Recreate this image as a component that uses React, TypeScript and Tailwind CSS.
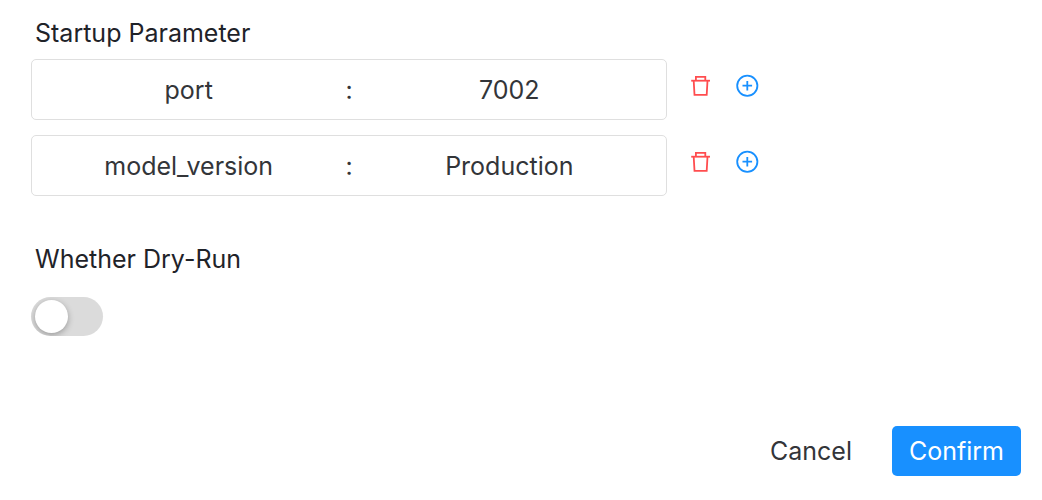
import { useState } from 'react';

type Param = {
  id: number;
  name: string;
  value: string;
};

function TrashIcon() {
  return (
    <svg className="h-6 w-6" viewBox="0 0 24 24" fill="none" stroke="currentColor" strokeWidth="1.8" aria-hidden="true">
      <path d="M2.2 6.7h18.8" />
      <path d="M6.9 6.7V2.9h9.4v3.8" />
      <path d="M4.7 6.7l.8 14.1h12.2l.8-14.1" />
    </svg>
  );
}

function PlusCircleIcon() {
  return (
    <svg className="h-6 w-6" viewBox="0 0 24 24" fill="none" stroke="currentColor" strokeWidth="1.8" aria-hidden="true">
      <circle cx="12.3" cy="11.7" r="10.1" />
      <path d="M12.3 6.9v9.6M7.5 11.7h9.6" />
    </svg>
  );
}

export default function App() {
  const [params, setParams] = useState<Param[]>([
    { id: 1, name: 'port', value: '7002' },
    { id: 2, name: 'model_version', value: 'Production' },
  ]);
  const [dryRun, setDryRun] = useState(false);

  const update = (id: number, patch: Partial<Param>) =>
    setParams(params.map((p) => (p.id === id ? { ...p, ...patch } : p)));

  const remove = (id: number) => setParams(params.filter((p) => p.id !== id));

  const addAfter = (index: number) => {
    const next = [...params];
    next.splice(index + 1, 0, { id: Date.now(), name: '', value: '' });
    setParams(next);
  };

  return (
    <form
      className="bg-white pt-[15px] pr-[21px] pb-6 pl-[31px] font-['Inter','Liberation_Sans',sans-serif] text-[25px] leading-9 text-[#333539]"
      onSubmit={(e) => e.preventDefault()}
    >
      <fieldset>
        <legend className="px-1 text-[#1f2329]">Startup Parameter</legend>
        <div className="mt-2 flex flex-col gap-[15px]">
          {params.map((param, index) => (
            <div key={param.id} className="flex items-start gap-[22px]">
              <div className="flex h-[61px] max-w-[636px] min-w-0 flex-1 items-center rounded-[5px] border border-[#dfdfdf]">
                <input
                  className="w-0 flex-1 bg-transparent text-center outline-none"
                  aria-label="Parameter name"
                  value={param.name}
                  onChange={(e) => update(param.id, { name: e.target.value })}
                />
                <span>:</span>
                <input
                  className="w-0 flex-1 bg-transparent text-center outline-none"
                  aria-label="Parameter value"
                  value={param.value}
                  onChange={(e) => update(param.id, { value: e.target.value })}
                />
              </div>
              <div className="flex gap-[22px] pt-[15px]">
                <button type="button" aria-label="Delete parameter" className="text-[#ff4d4f]" onClick={() => remove(param.id)}>
                  <TrashIcon />
                </button>
                <button type="button" aria-label="Add parameter" className="text-[#1890ff]" onClick={() => addAfter(index)}>
                  <PlusCircleIcon />
                </button>
              </div>
            </div>
          ))}
        </div>
      </fieldset>

      <div className="mt-[45px] flex flex-col items-start gap-5">
        <label htmlFor="dry-run" className="px-1 text-[#1f2329]">
          Whether Dry-Run
        </label>
        <input
          id="dry-run"
          type="checkbox"
          role="switch"
          checked={dryRun}
          onChange={(e) => setDryRun(e.target.checked)}
          className="flex h-[39px] w-18 cursor-pointer appearance-none items-center overflow-hidden rounded-full bg-[#dbdbdb] px-1 transition-colors before:h-[33px] before:w-[33px] before:rounded-full before:bg-white before:shadow-[0_2px_6px_rgba(0,0,0,0.3)] before:transition-transform checked:bg-[#1890ff] checked:before:translate-x-8"
        />
      </div>

      <div className="mt-[90px] flex justify-end gap-5">
        <button type="button" className="h-[50px] px-5">
          Cancel
        </button>
        <button type="submit" className="h-[50px] rounded-[5px] bg-[#1890ff] px-[17px] text-white">
          Confirm
        </button>
      </div>
    </form>
  );
}
